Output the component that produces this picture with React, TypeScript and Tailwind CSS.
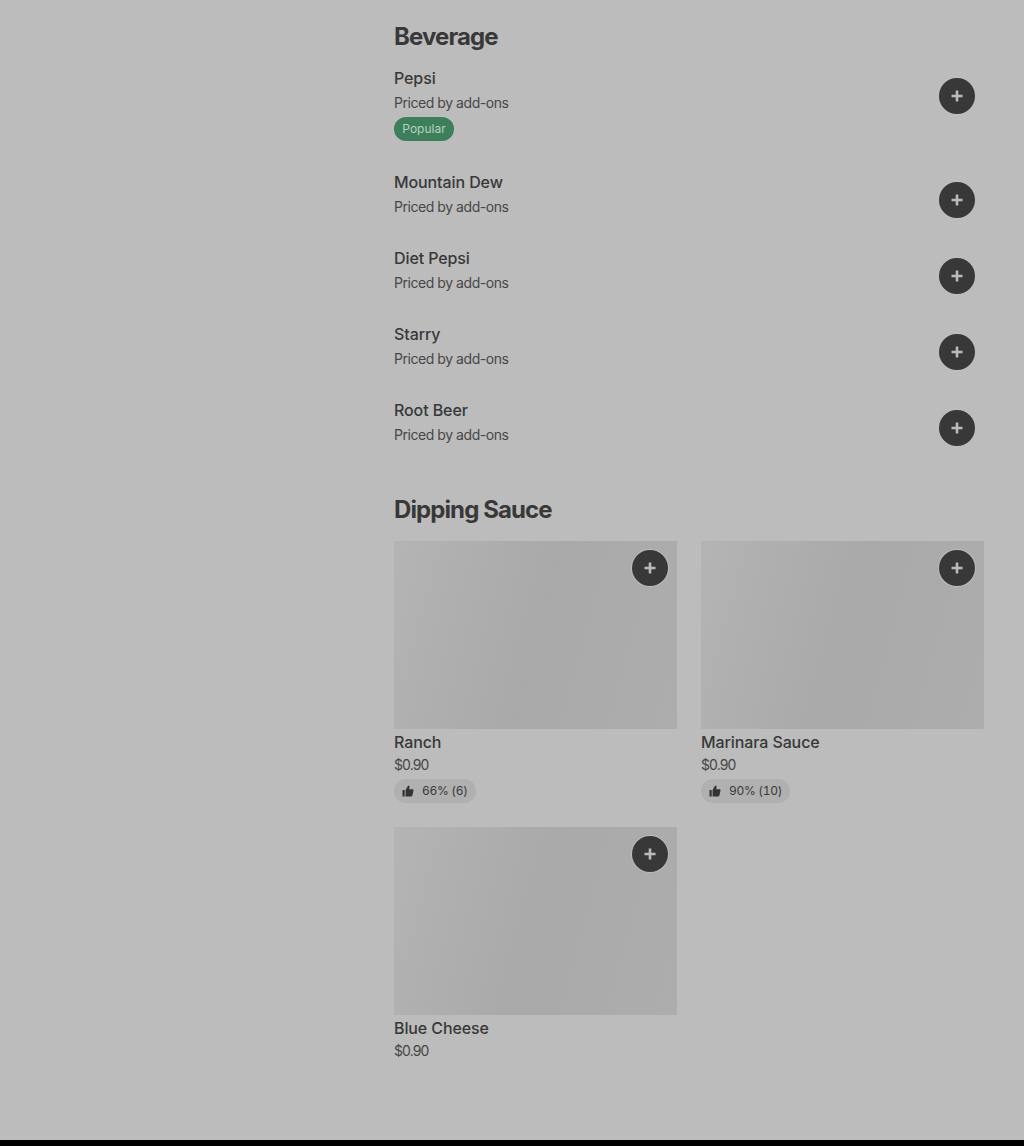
const BEVERAGES = [
  { name: 'Pepsi', popular: true },
  { name: 'Mountain Dew' },
  { name: 'Diet Pepsi' },
  { name: 'Starry' },
  { name: 'Root Beer' },
]

const SAUCES = [
  { name: 'Ranch', rating: '66% (6)' },
  { name: 'Marinara Sauce', rating: '90% (10)' },
  { name: 'Blue Cheese' },
]

function AddButton({ className }: { className?: string }) {
  return (
    <button className={`flex h-9 w-9 items-center justify-center rounded-full bg-[#383838] ${className ?? ''}`}>
      <svg width="14" height="14" viewBox="0 0 14 14" fill="#bbbbbb">
        <path d="M5.7 1.5h2.6v4.2h4.2v2.6H8.3v4.2H5.7V8.3H1.5V5.7h4.2z" />
      </svg>
    </button>
  )
}

function ThumbIcon() {
  return (
    <svg width="12" height="12" viewBox="0 0 12 12" fill="#333333">
      <path d="M0.5 5h2.2v6.5H0.5zM3.6 11.5V4.9L6.2 0.5l1 0.5c0.4 0.3 0.5 0.7 0.4 1.1L7.2 4.2h3.3c0.7 0 1.2 0.6 1 1.3l-1.2 5.2c-0.1 0.5-0.5 0.8-1 0.8z" />
    </svg>
  )
}

export default function App() {
  return (
    <div className="flex h-[1146px] flex-col font-['Inter',sans-serif] text-[#383838]">
      <main className="flex-1 bg-[#bcbcbc] pl-[394px] pr-[40px] pt-[23px]">
        <h2 className="text-[24px] font-bold leading-[28px] tracking-[-0.9px]">Beverage</h2>
        <div className="mt-[17px] flex flex-col gap-[31px] pr-[9px]">
          {BEVERAGES.map(item => (
            <div key={item.name} className="flex items-start justify-between">
              <div>
                <div className="text-[16px] font-medium leading-[20px] tracking-[-0.1px]">{item.name}</div>
                <div className="mt-[5px] text-[14px] leading-[20px] tracking-[-0.45px] text-[#474747]">Priced by add-ons</div>
                {item.popular && (
                  <span className="mt-[4px] flex h-6 w-[60px] items-center justify-center rounded-full bg-[#3e7f5b] text-[12px] text-[#b5cfc0]">
                    Popular
                  </span>
                )}
              </div>
              <AddButton className="-mb-px mt-[10px]" />
            </div>
          ))}
        </div>

        <h2 className="mt-[51px] text-[24px] font-bold leading-[28px] tracking-[-0.9px]">Dipping Sauce</h2>
        <div className="mt-[17px] grid grid-cols-2 gap-x-6 gap-y-6">
          {SAUCES.map(item => (
            <div key={item.name}>
              <div className="relative h-[188px] bg-[linear-gradient(105deg,#b4b4b4,#a9a9a9_50%,#adadad)]">
                <AddButton className="absolute right-[9px] top-[9px] ring-1 ring-[#bcbcbc]" />
              </div>
              <div className="mt-[3px] text-[16px] font-medium leading-[20px] tracking-[-0.1px]">{item.name}</div>
              <div className="mt-[3px] text-[14px] leading-[20px] tracking-[-0.9px] text-[#474747]">$0.90</div>
              {item.rating && (
                <span className="mt-[4px] inline-flex h-6 items-center gap-[8px] rounded-full bg-[#b0b0b0] px-2 text-[12px] tabular-nums tracking-[-0.3px]">
                  <ThumbIcon />
                  {item.rating}
                </span>
              )}
            </div>
          ))}
        </div>
      </main>
      <footer className="h-[6px] bg-black" />
    </div>
  )
}
